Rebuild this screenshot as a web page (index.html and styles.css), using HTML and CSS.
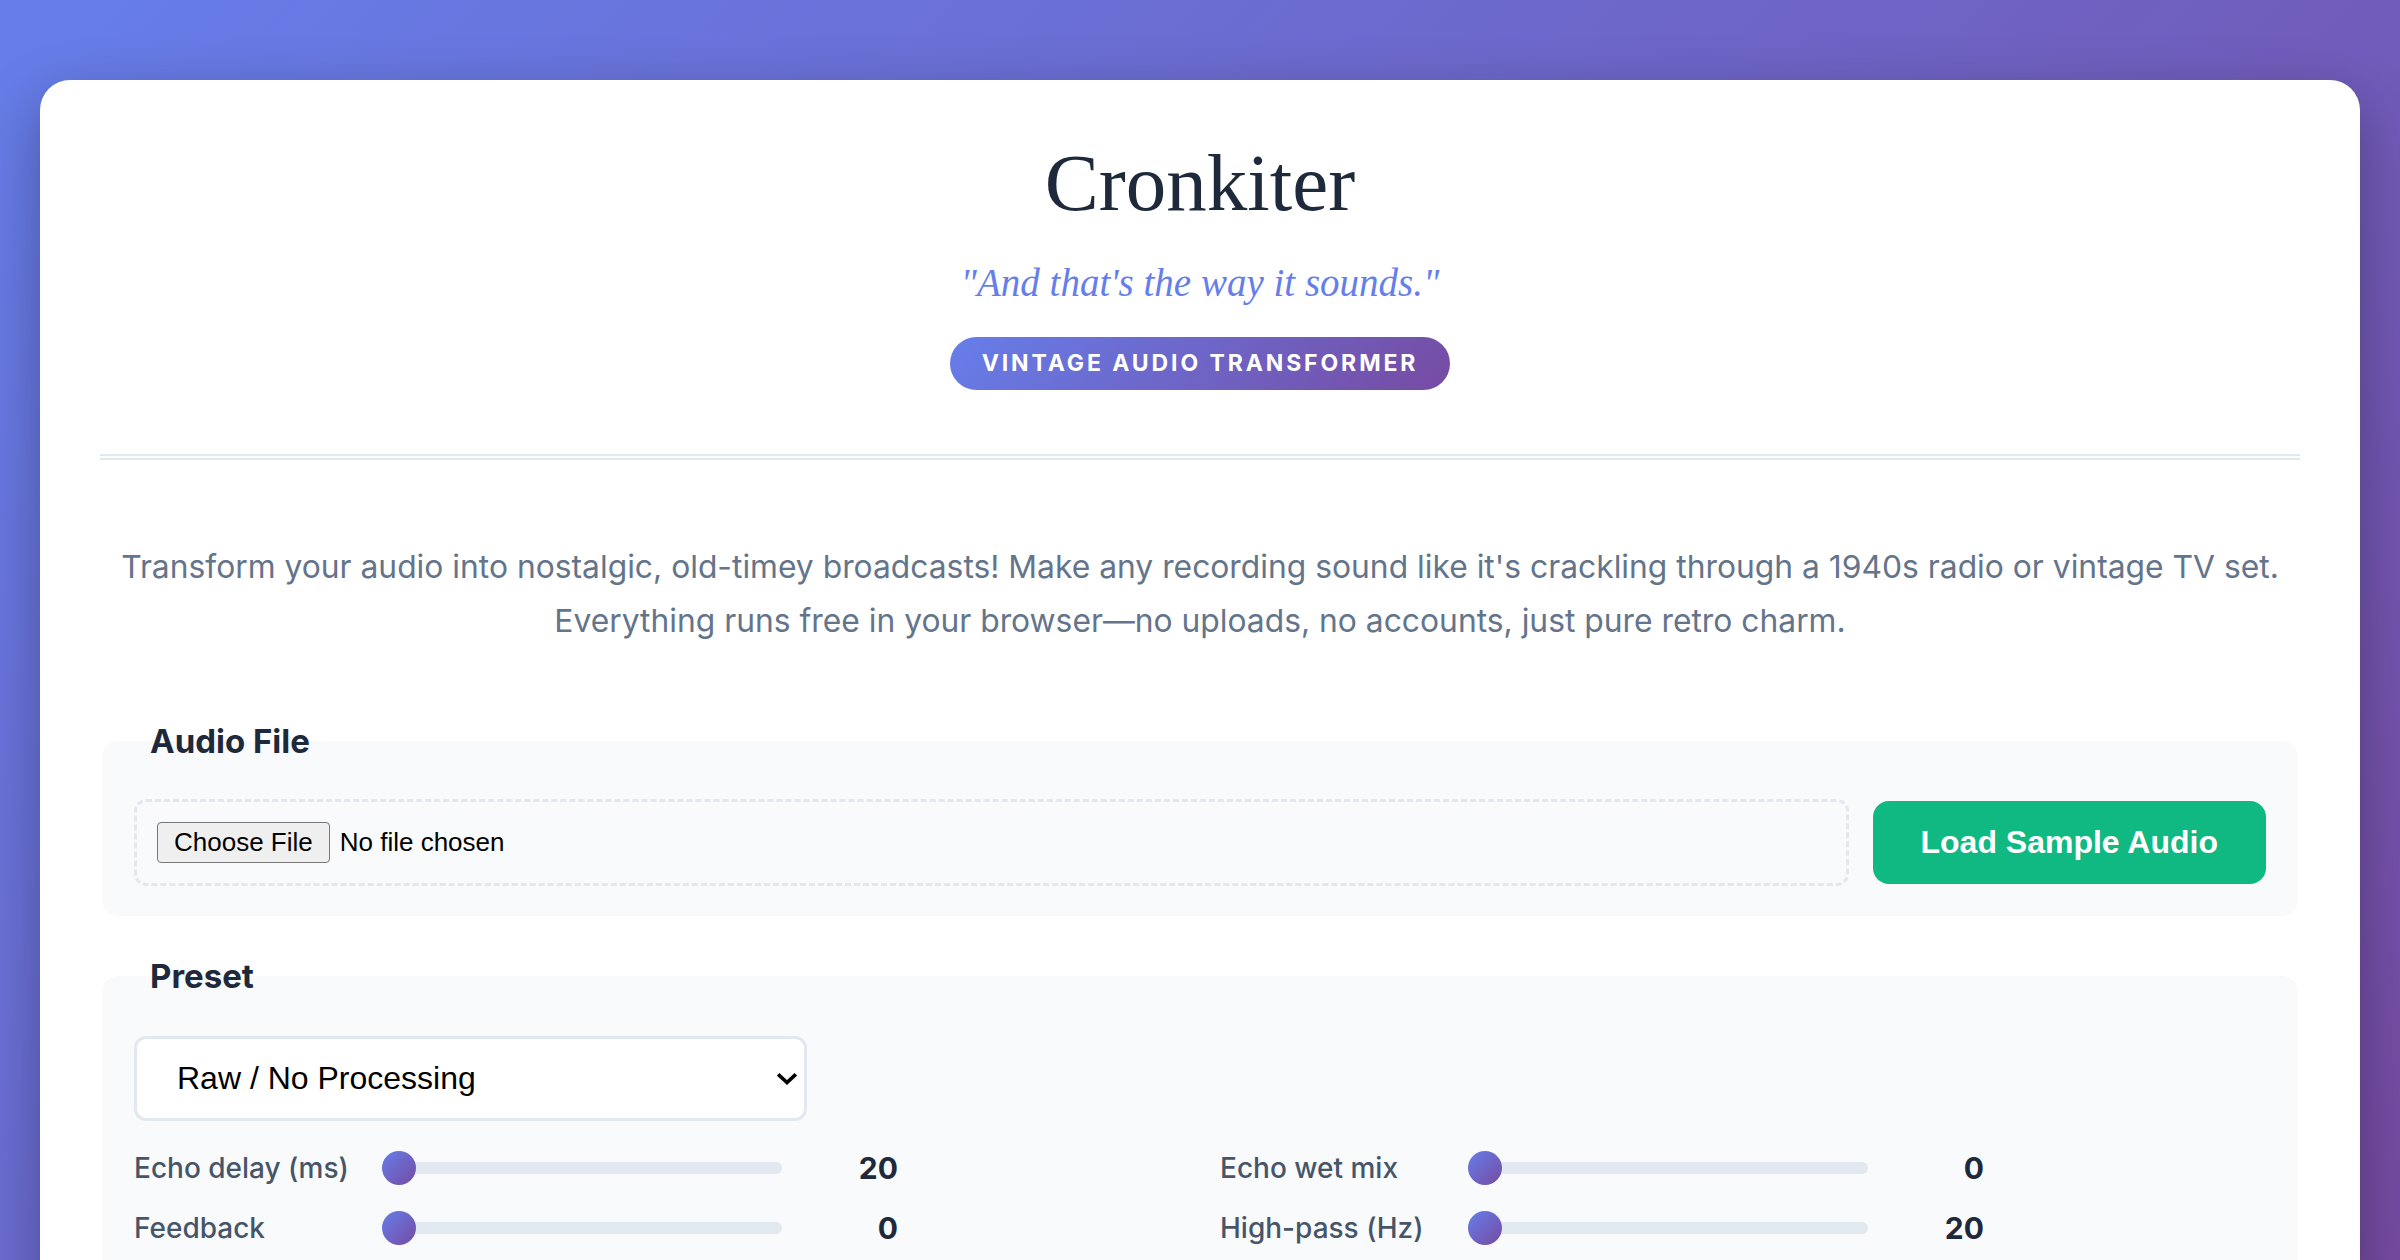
FILE: index.html
```html
<!DOCTYPE html>
<html lang="en">
<head>
<meta charset="utf-8">
<title>Cronkiter</title>
<link rel="stylesheet" href="styles.css">
</head>
<body>
<main class="card">
  <header class="header">
    <h1 class="title">Cronkiter</h1>
    <p class="tagline">"And that's the way it sounds."</p>
    <span class="badge">Vintage Audio Transformer</span>
  </header>

  <p class="intro">Transform your audio into nostalgic, old-timey broadcasts! Make any recording sound like it's crackling through a 1940s radio or vintage TV set.<br>Everything runs free in your browser—no uploads, no accounts, just pure retro charm.</p>

  <fieldset class="panel">
    <legend class="panel-title">Audio File</legend>
    <div class="file-row">
      <div class="drop-zone"><input type="file" class="file-input" accept="audio/*"></div>
      <button class="btn-sample" type="button">Load Sample Audio</button>
    </div>
  </fieldset>

  <fieldset class="panel panel-preset">
    <legend class="panel-title">Preset</legend>
    <div class="select-wrap">
      <select class="preset-select">
        <option>Raw / No Processing</option>
        <option>1940s Radio</option>
        <option>Vintage TV Set</option>
        <option>Gramophone</option>
      </select>
      <svg class="select-chevron" width="20" height="12" viewBox="0 0 20 12" aria-hidden="true"><path d="M2.5 2.5 L10 9.5 L17.5 2.5" fill="none" stroke="#000" stroke-width="3.6" stroke-linecap="square" stroke-linejoin="miter"/></svg>
    </div>
    <div class="controls">
      <div class="control"><label class="control-label">Echo delay (ms)</label><input class="slider" type="range" min="20" max="500" value="20"><span class="control-value">20</span></div>
      <div class="control"><label class="control-label">Echo wet mix</label><input class="slider" type="range" min="0" max="100" value="0"><span class="control-value">0</span></div>
      <div class="control"><label class="control-label">Feedback</label><input class="slider" type="range" min="0" max="90" value="0"><span class="control-value">0</span></div>
      <div class="control"><label class="control-label">High-pass (Hz)</label><input class="slider" type="range" min="20" max="2000" value="20"><span class="control-value">20</span></div>
    </div>
  </fieldset>
</main>
</body>
</html>
```

FILE: styles.css
```css
* { box-sizing: border-box; }

html, body { margin: 0; }

body {
  min-height: 100vh;
  padding: 80px 40px 40px;
  background: linear-gradient(135deg, #667eea 0%, #764ba2 100%) fixed;
  font-family: Inter, "Noto Sans", sans-serif;
  color: #1e293b;
}

.card {
  background: #ffffff;
  border-radius: 30px;
  box-shadow: 0 20px 60px rgba(0, 0, 0, 0.3);
  padding: 55px 60px 60px;
}

.header {
  display: flex;
  flex-direction: column;
  align-items: center;
  padding-bottom: 64px;
  border-bottom: 6px double #e2e8f0;
  margin-bottom: 80px;
}

.title {
  margin: 0;
  font-family: "Liberation Serif", "Times New Roman", serif;
  font-weight: 400;
  font-size: 81px;
  line-height: 1.2;
  color: #1e293b;
}

.tagline {
  margin: 26px 0 0;
  font-family: "Liberation Serif", "Times New Roman", serif;
  font-style: italic;
  font-size: 39px;
  line-height: 1.3;
  color: #667eea;
}

.badge {
  margin-top: 28px;
  padding: 14px 32px;
  border-radius: 999px;
  background: linear-gradient(135deg, #667eea 0%, #764ba2 100%);
  color: #ffffff;
  font-size: 23px;
  line-height: 25px;
  font-weight: 700;
  letter-spacing: 2.9px;
  text-transform: uppercase;
}

.intro {
  margin: 0 0 73px;
  text-align: center;
  font-size: 31.8px;
  line-height: 54px;
  color: #64748b;
}

.panel {
  margin: 0 2px 40px;
  padding: 38px 32px 30px;
  border: none;
  border-radius: 16px;
  background: #f8fafc;
  min-inline-size: 0;
}

.panel-preset {
  padding-top: 40px;
}

.panel-title {
  padding: 0 16px;
  font-size: 33px;
  font-weight: 700;
  color: #1e293b;
}

.file-row {
  display: flex;
  align-items: center;
  gap: 24px;
}

.drop-zone {
  flex: 1;
  padding: 20px;
  border: 3px dashed #e2e8f0;
  border-radius: 12px;
}

.file-input {
  font-family: "Liberation Sans", Arial, sans-serif;
  font-size: 26px;
  color: #000000;
}

.file-input::file-selector-button {
  font: inherit;
  color: #000000;
  margin-right: 10px;
  padding: 4px 16px;
  border: 1px solid #767676;
  border-radius: 4px;
  background: #efefef;
}

.btn-sample {
  height: 83px;
  padding: 0 48px;
  border: none;
  border-radius: 16px;
  background: #10b981;
  color: #ffffff;
  font-family: "Liberation Sans", Arial, sans-serif;
  font-size: 32px;
  font-weight: 700;
}

.select-wrap {
  position: relative;
  width: 673px;
  margin-bottom: 26px;
}

.preset-select {
  display: block;
  width: 100%;
  height: 85px;
  padding: 0 60px 0 40px;
  border: 3px solid #e2e8f0;
  border-radius: 12px;
  background: #ffffff;
  color: #000000;
  font-family: "Liberation Sans", Arial, sans-serif;
  font-size: 32px;
  -webkit-appearance: none;
  appearance: none;
}

.select-chevron {
  position: absolute;
  right: 10px;
  top: 37px;
  pointer-events: none;
}

.controls {
  display: grid;
  grid-template-columns: 1fr 1fr;
  column-gap: 40px;
  row-gap: 18px;
}

.control {
  display: grid;
  grid-template-columns: 232px 400px 100px;
  column-gap: 16px;
  align-items: center;
  height: 42px;
}

.control-label {
  font-size: 28px;
  font-weight: 500;
  color: #475569;
}

.control-value {
  text-align: right;
  font-size: 30px;
  font-weight: 700;
  color: #1e293b;
}

.slider {
  -webkit-appearance: none;
  appearance: none;
  width: 400px;
  height: 34px;
  margin: 0;
  background: transparent;
}

.slider::-webkit-slider-runnable-track {
  height: 12px;
  border-radius: 6px;
  background: #e2e8f0;
}

.slider::-webkit-slider-thumb {
  -webkit-appearance: none;
  appearance: none;
  width: 34px;
  height: 34px;
  margin-top: -11px;
  border-radius: 50%;
  background: linear-gradient(135deg, #667eea 0%, #764ba2 100%);
  border: none;
}
```
